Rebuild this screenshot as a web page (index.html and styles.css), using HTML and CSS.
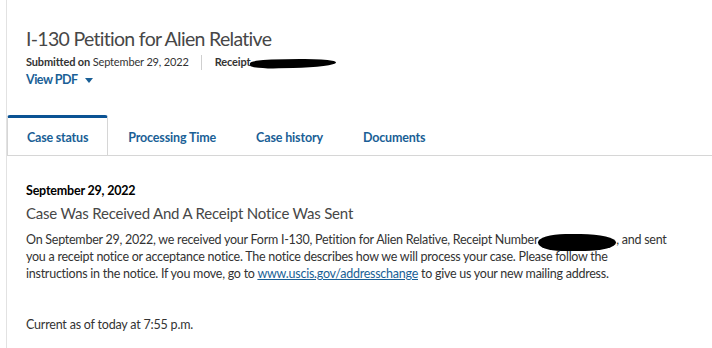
FILE: index.html
```html
<!DOCTYPE html>
<html>
<head>
<meta charset="utf-8">
<link rel="stylesheet" href="styles.css">
</head>
<body>
<div class="card">
  <header class="head">
    <h1 class="title">I-130 Petition for Alien Relative</h1>
    <div class="meta">
      <span><b>Submitted on</b> September 29, 2022</span>
      <span class="sep"></span>
      <span class="rcpt"><b>Receipt</b><span class="redact redact-sm"></span></span>
    </div>
    <a class="pdf" href="#">View PDF <span class="caret"></span></a>
  </header>
  <nav class="tabs">
    <a class="tab active" href="#">Case status</a>
    <a class="tab" href="#">Processing Time</a>
    <a class="tab" href="#">Case history</a>
    <a class="tab" href="#">Documents</a>
  </nav>
  <section class="status">
    <div class="date">September 29, 2022</div>
    <h2 class="heading">Case Was Received And A Receipt Notice Was Sent</h2>
    <p class="desc">On September 29, 2022, we received your Form I-130, Petition for Alien Relative, Receipt Number<span class="redact redact-lg"></span>, and sent you a receipt notice or acceptance notice. The notice describes how we will process your case. Please follow the instructions in the notice. If you move, go to <a href="#">www.uscis.gov/addresschange</a> to give us your new mailing address.</p>
    <p class="current">Current as of today at 7:55 p.m.</p>
  </section>
</div>
</body>
</html>
```
FILE: styles.css
```css
html, body {
  margin: 0;
  padding: 0;
  background: #fff;
}
body {
  font-family: Lato, "Noto Sans", sans-serif;
  color: #333;
  padding-left: 6px;
}
.card {
  border-left: 1px solid #e2e2e2;
  height: 348px;
  overflow: hidden;
}
.head {
  display: flex;
  flex-direction: column;
  align-items: flex-start;
  padding: 27px 0 0 19px;
}
.title {
  margin: 0;
  font-weight: 400;
  font-size: 19.5px;
  line-height: 24px;
  letter-spacing: -0.7px;
  color: #474747;
}
.meta {
  display: flex;
  align-items: center;
  margin-top: 3px;
  font-size: 11px;
  line-height: 16px;
  letter-spacing: -0.15px;
  color: #333;
}
.meta b { font-weight: 700; }
.sep {
  width: 1px;
  height: 15px;
  background: #cfcfcf;
  margin: 0 13px 0 12px;
}
.rcpt { display: flex; align-items: center; }
.redact {
  display: inline-block;
  background: #000;
}
.redact-sm {
  width: 86px;
  height: 9px;
  border-radius: 30% 70% 60% 40% / 40% 60% 60% 50%;
  transform: rotate(-1.5deg);
  margin-top: 2px;
}
.pdf {
  display: flex;
  align-items: center;
  margin-top: 1px;
  font-size: 12.5px;
  line-height: 18px;
  letter-spacing: -0.5px;
  color: #1a5f96;
  text-decoration: none;
  font-weight: 700;
}
.caret {
  width: 0;
  height: 0;
  border-left: 4.5px solid transparent;
  border-right: 4.5px solid transparent;
  border-top: 5px solid #1a5f96;
  margin-left: 7px;
}
.tabs {
  display: flex;
  margin-top: 26px;
  border-bottom: 1px solid #d6d6d6;
}
.tab {
  display: block;
  padding: 12px 19px 9px;
  font-size: 12.5px;
  line-height: 16px;
  letter-spacing: -0.15px;
  font-weight: 700;
  color: #1a5f96;
  text-decoration: none;
  border-top: 3px solid transparent;
  border-left: 1px solid transparent;
  border-right: 1px solid transparent;
  white-space: nowrap;
}
.tab.active {
  letter-spacing: -0.2px;
  border-top-color: #0b5394;
  border-top-left-radius: 3px;
  border-top-right-radius: 3px;
  border-left-color: #d6d6d6;
  border-right-color: #d6d6d6;
}
.status {
  padding: 27px 0 0 19px;
}
.date {
  font-size: 12.5px;
  font-weight: 700;
  line-height: 16px;
  letter-spacing: -0.2px;
  color: #000;
}
.heading {
  margin: 4px 0 0;
  font-size: 15px;
  font-weight: 400;
  line-height: 20px;
  letter-spacing: -0.2px;
  color: #474747;
}
.desc {
  margin: 8px 0 0;
  max-width: 645px;
  font-size: 12.5px;
  line-height: 17px;
  letter-spacing: -0.25px;
  color: #333;
}
.desc a { color: #1a5f96; text-decoration: underline; }
.redact-lg {
  width: 78px;
  height: 17px;
  margin: -3px 0;
  vertical-align: -4px;
  border-radius: 35% 45% 40% 30% / 50% 50% 50% 50%;
}
.current {
  margin: 34px 0 0;
  font-size: 12.5px;
  line-height: 17px;
  letter-spacing: -0.2px;
  color: #333;
}
```
